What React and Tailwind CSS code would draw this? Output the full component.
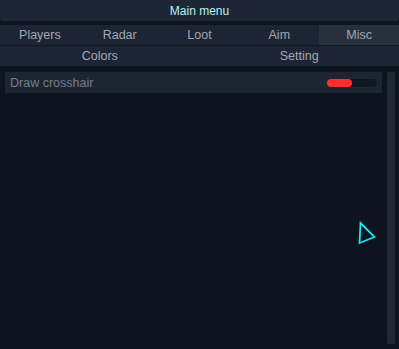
export default function App() {
  const tabs = ["Players", "Radar", "Loot", "Aim", "Misc"];
  return (
    <div className="w-[399px] h-[349px] bg-[#0e141d] flex flex-col overflow-hidden" style={{ fontFamily: '"Liberation Sans", Arial, sans-serif' }}>
      <div className="h-[21px] bg-[#1e2636] rounded-b-[3px] flex items-center justify-center pt-[1px] text-[12px] text-[#b2f2f0]">
        Main menu
      </div>
      <div className="h-[4px] bg-[#0f1520]" />
      <div className="h-[20px] grid grid-cols-5 bg-[#1d2433]">
        {tabs.map((t) => (
          <div
            key={t}
            className={
              t === "Misc"
                ? "flex items-center justify-center pt-[1px] text-[12.5px] text-[#a1a8b3] bg-[#27303c]"
                : "flex items-center justify-center pt-[1px] text-[12.5px] text-[#a1a8b3]"
            }
          >
            {t}
          </div>
        ))}
      </div>
      <div className="h-[1px] bg-[#111822]" />
      <div className="h-[20px] grid grid-cols-2 bg-[#1d2433]">
        <div className="flex items-center justify-center pt-[1px] text-[12.5px] text-[#a1a8b3]">Colors</div>
        <div className="flex items-center justify-center pt-[1px] text-[12.5px] text-[#a1a8b3]">Setting</div>
      </div>
      <div className="relative flex-1 flex pt-[6px] pb-[5px] pl-[5px] pr-[4px] gap-[5px]">
        <div className="flex-1">
          <div className="h-[21px] bg-[#1e2532] flex items-center justify-between pl-[5px] pr-[5px]">
            <span className="text-[12.5px] text-[#747c87] pt-[1px]">Draw crosshair</span>
            <div className="w-[50px] h-[8px] rounded-full bg-[#111722] flex">
              <div className="w-[25px] h-[8px] rounded-full bg-[#ff2e2e]" />
            </div>
          </div>
        </div>
        <div className="w-[8px] bg-[#1f2834] rounded-[2px]" />
        <svg className="absolute left-[356px] top-[154px]" width="24" height="26" viewBox="0 0 24 26">
          <path d="M4.5 3 L18.5 17 L3.5 23 Z" fill="none" stroke="#14e4f6" strokeWidth="1.8" strokeLinejoin="miter" />
        </svg>
      </div>
    </div>
  );
}
